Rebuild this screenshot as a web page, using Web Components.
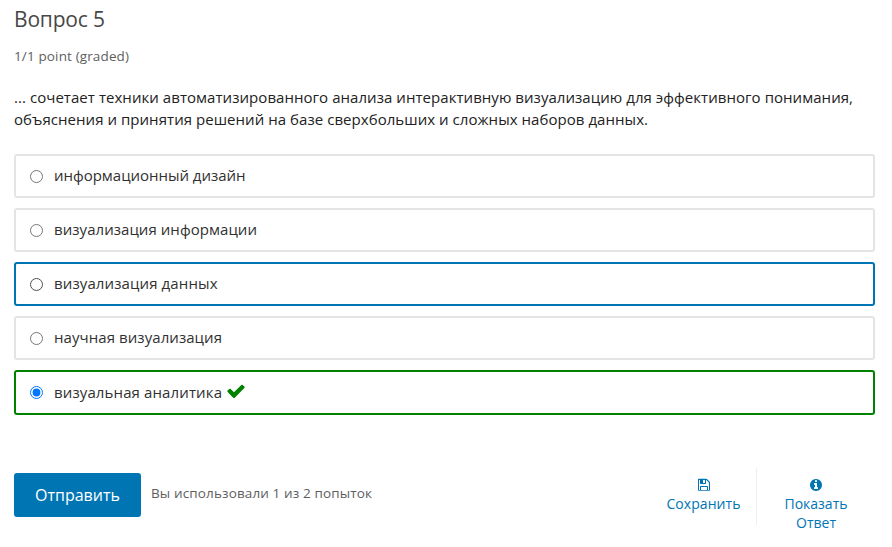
<!DOCTYPE html>
<html lang="ru">
<head>
<meta charset="utf-8">
<title>Вопрос 5</title>
<style>
body { margin: 0; background: #fff; font-family: "Open Sans", "Noto Sans", sans-serif; }
</style>
</head>
<body>
<quiz-problem></quiz-problem>
<script>
const ICONS = {
  check: "M1671 566q0 40-28 68l-724 724-136 136q-28 28-68 28t-68-28l-136-136-362-362q-28-28-28-68t28-68l136-136q28-28 68-28t68 28l294 295 656-657q28-28 68-28t68 28l136 136q28 28 28 68z",
  save: "M512 1536h768v-384h-768v384zm896 0h128v-896q0-14-10-38.5t-20-34.5l-281-281q-10-10-34-20t-39-10v416q0 40-28 68t-68 28h-576q-40 0-68-28t-28-68v-416h-128v1280h128v-416q0-40 28-68t68-28h832q40 0 68 28t28 68v416zm-384-928v-320q0-13-9.5-22.5t-22.5-9.5h-192q-13 0-22.5 9.5t-9.5 22.5v320q0 13 9.5 22.5t22.5 9.5h192q13 0 22.5-9.5t9.5-22.5zm640 32v896q0 40-28 68t-68 28h-1344q-40 0-68-28t-28-68v-1344q0-40 28-68t68-28h928q40 0 88 20t76 48l280 280q28 28 48 76t20 88z",
  info: "M1152 1376v-160q0-14-9-23t-23-9h-96v-512q0-14-9-23t-23-9h-320q-14 0-23 9t-9 23v160q0 14 9 23t23 9h96v320h-96q-14 0-23 9t-9 23v160q0 14 9 23t23 9h448q14 0 23-9t9-23zm-128-896v-160q0-14-9-23t-23-9h-192q-14 0-23 9t-9 23v160q0 14 9 23t23 9h192q14 0 23-9t9-23zm640 416q0 209-103 385.5t-279.5 279.5-385.5 103-385.5-103-279.5-279.5-103-385.5 103-385.5 279.5-279.5 385.5-103 385.5 103 279.5 279.5 103 385.5z"
};

class UiIcon extends HTMLElement {
  connectedCallback() {
    const size = this.getAttribute("size") || 14;
    this.attachShadow({ mode: "open" }).innerHTML = `
      <style>:host{display:block;flex:none;width:${size}px;height:${size}px}svg{display:block;fill:currentColor}</style>
      <svg width="${size}" height="${size}" viewBox="0 0 1792 1792"><path d="${ICONS[this.getAttribute("name")]}"/></svg>`;
  }
}
customElements.define("ui-icon", UiIcon);

/* One line of text, tracked so that it takes the given measure in pixels. */
class TrackedText extends HTMLElement {
  connectedCallback() {
    this.attachShadow({ mode: "open" }).innerHTML = `
      <style>:host{display:block;white-space:nowrap}span{display:inline-block}</style><span><slot></slot></span>`;
    const span = this.shadowRoot.querySelector("span");
    const natural = span.getBoundingClientRect().width;
    const n = this.textContent.length;
    const step = (Number(this.getAttribute("measure")) - natural) / (n - 1);
    span.style.letterSpacing = step + "px";
    span.style.marginRight = -step + "px";
  }
}
customElements.define("tracked-text", TrackedText);

class ChoiceOption extends HTMLElement {
  connectedCallback() {
    this.attachShadow({ mode: "open" }).innerHTML = `
      <style>
        :host{display:block;box-sizing:border-box;height:44px;border:2px solid #e4e4e4;border-radius:3px;color:#313131;font-size:15px;line-height:22px}
        :host([state=focus]){border-color:#0075b4}
        :host([state=correct]){border-color:#008100;height:45px}
        label{display:flex;align-items:center;height:100%;padding-left:14px}
        tracked-text{margin-bottom:2px}
        input{flex:none;width:13px;height:13px;margin:1px 11px 0 0}
        :host([state=focus]) input{appearance:none;box-sizing:border-box;border:1px solid #4f4f4f;border-radius:50%;background:#fff}
        :host([state=correct]) input{margin-top:0}
        ui-icon{color:#008100;margin:-3px 0 0 4px}
      </style>
      <label><input type="radio" ${this.hasAttribute("checked") ? "checked" : ""}>
        <tracked-text measure="${this.getAttribute("measure")}">${this.getAttribute("text")}</tracked-text>
        ${this.getAttribute("state") === "correct" ? '<ui-icon name="check" size="20"></ui-icon>' : ""}
      </label>`;
  }
}
customElements.define("choice-option", ChoiceOption);

class ActionLink extends HTMLElement {
  connectedCallback() {
    this.attachShadow({ mode: "open" }).innerHTML = `
      <style>
        :host{display:flex;flex-direction:column;align-items:center;color:#0075b4;font-size:14px;line-height:19px;padding-top:10px;box-sizing:border-box}
        ui-icon{margin-bottom:2px}
      </style>
      <ui-icon name="${this.getAttribute("icon")}"></ui-icon><slot></slot>`;
  }
}
customElements.define("action-link", ActionLink);

class QuizProblem extends HTMLElement {
  connectedCallback() {
    this.attachShadow({ mode: "open" }).innerHTML = `
      <style>
        :host{display:block;box-sizing:border-box;height:547px;padding:6px 17px 0 14px;overflow:hidden}
        h3{margin:0;font-size:21px;line-height:27px;font-weight:400;color:#474747}
        .grade{margin-top:14px;font-size:13.5px;line-height:18px;color:#5e5e5e}
        .question{margin-top:21px;font-size:15px;line-height:22px;color:#222}
        .choices{display:flex;flex-direction:column;gap:10px;margin-top:24px}
        footer{display:flex;margin-top:53px;align-items:flex-start}
        button{width:127px;height:44px;margin:5px 10px 0 0;padding:0;border:0;border-radius:3px;background:#0075b4;color:#fff;font:16px "Open Sans",sans-serif;display:flex;align-items:center;justify-content:center}
        .attempts{margin-top:16px;font-size:13.5px;line-height:18px;color:#5e5e5e}
        .actions{display:flex;margin-left:auto}
        action-link:first-child{width:106px;height:57px;border-right:1px solid #eee}
        action-link:last-child{width:118px}
      </style>
      <h3><tracked-text measure="91">Вопрос 5</tracked-text></h3>
      <div class="grade"><tracked-text measure="115">1/1 point (graded)</tracked-text></div>
      <div class="question">
        <tracked-text measure="839">... сочетает техники автоматизированного анализа интерактивную визуализацию для эффективного понимания,</tracked-text>
        <tracked-text measure="634">объяснения и принятия решений на базе сверхбольших и сложных наборов данных.</tracked-text>
      </div>
      <div class="choices">
        <choice-option measure="191.5" text="информационный дизайн"></choice-option>
        <choice-option measure="203" text="визуализация информации"></choice-option>
        <choice-option measure="163.5" text="визуализация данных" state="focus"></choice-option>
        <choice-option measure="168" text="научная визуализация"></choice-option>
        <choice-option measure="168" text="визуальная аналитика" state="correct" checked></choice-option>
      </div>
      <footer>
        <button><tracked-text measure="85">Отправить</tracked-text></button>
        <div class="attempts"><tracked-text measure="221">Вы использовали 1 из 2 попыток</tracked-text></div>
        <div class="actions">
          <action-link icon="save"><tracked-text measure="74">Сохранить</tracked-text></action-link>
          <action-link icon="info"><tracked-text measure="63">Показать</tracked-text><tracked-text measure="40">Ответ</tracked-text></action-link>
        </div>
      </footer>`;
  }
}
customElements.define("quiz-problem", QuizProblem);
</script>
</body>
</html>
